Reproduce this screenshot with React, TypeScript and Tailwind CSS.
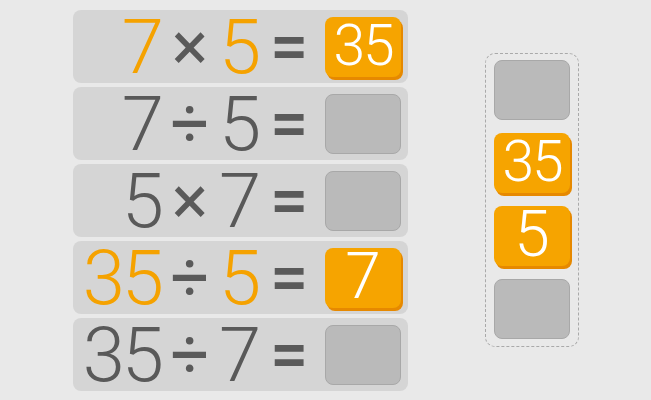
import React from "react";

type Row = {
  a: string;
  op: string;
  b: string;
  answer: string | null;
  lit: boolean;
};

const rows: Row[] = [
  { a: "7", op: "×", b: "5", answer: "35", lit: true },
  { a: "7", op: "÷", b: "5", answer: null, lit: false },
  { a: "5", op: "×", b: "7", answer: null, lit: false },
  { a: "35", op: "÷", b: "5", answer: "7", lit: true },
  { a: "35", op: "÷", b: "7", answer: null, lit: false },
];

const tiles: (string | null)[] = [null, "35", "5", null];

function Slot({ value }: { value: string | null }) {
  if (!value) {
    return <div className="w-[76px] h-[60px] rounded-[8px] bg-[#bababa] border border-[#a8a8a8]" />;
  }
  return (
    <div className="w-[76px] h-[60px] rounded-[8px] bg-[#f6a400] shadow-[2px_3px_0_#e68900] flex items-center justify-center text-white font-light">
      <span className={value.length > 1 ? "text-[57px] leading-[50px] tracking-[-2px] -mt-[2px]" : "text-[64px] leading-[56px] -mt-[2px]"}>{value}</span>
    </div>
  );
}

export default function App() {
  return (
    <div
      className="w-[651px] h-[400px] bg-[#e9e9e9] flex overflow-hidden"
      style={{ fontFamily: "Roboto, 'Noto Sans', sans-serif" }}
    >
      <div className="ml-[73px] mt-[10px] flex flex-col gap-[4px]">
        {rows.map((r, i) => (
          <div key={i} className="w-[335px] h-[73px] rounded-[8px] bg-[#d5d5d5] flex items-center">
            <div className={`w-[88px] text-right text-[76px] font-light leading-[64px] tracking-[-3px] ${r.lit ? "text-[#f5a200]" : "text-[#595959]"}`}>
              {r.a}
            </div>
            <div className="w-[58px] text-center text-[68px] font-normal leading-[60px] text-[#5a5a5a]">{r.op}</div>
            <div className={`w-[42px] text-[76px] font-light leading-[64px] ${r.lit ? "text-[#f5a200]" : "text-[#595959]"}`}>
              {r.b}
            </div>
            <div className="w-[56px] text-center text-[68px] font-medium leading-[60px] text-[#5a5a5a]">=</div>
            <div className="ml-[8px]">
              <Slot value={r.answer} />
            </div>
          </div>
        ))}
      </div>

      <div className="ml-[77px] mt-[53px] w-[94px] h-[294px] rounded-[10px] border border-dashed border-[#a9a9a9] flex flex-col gap-[12px] pt-[6px] pl-[8px]">
        {tiles.map((t, i) => (
          <div key={i} className="h-[61px]">
            <Slot value={t} />
          </div>
        ))}
      </div>
    </div>
  );
}
